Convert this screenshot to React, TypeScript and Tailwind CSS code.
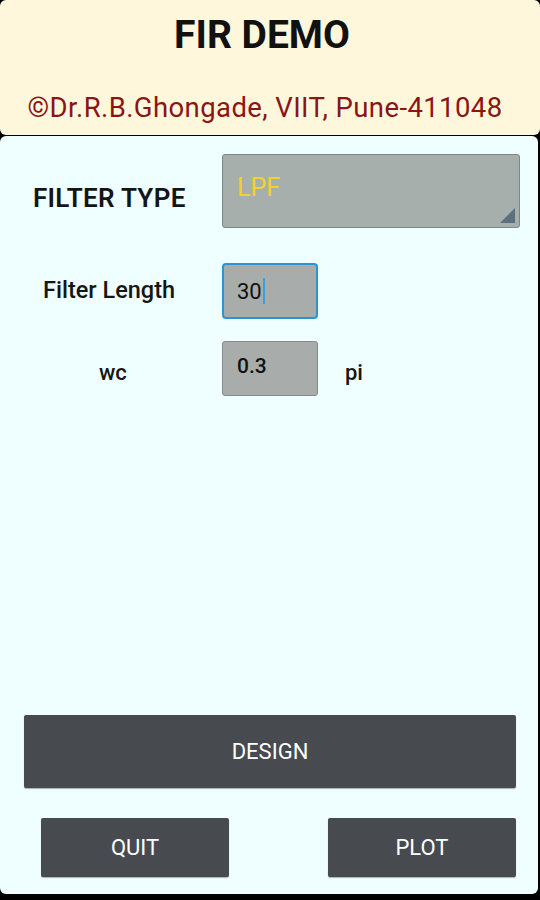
import React from "react";

export default function App() {
  return (
    <div
      className="w-[540px] h-[900px] bg-black flex flex-col overflow-hidden"
      style={{ fontFamily: "Roboto, 'Noto Sans', sans-serif" }}
    >
      {/* Header */}
      <div className="h-[135px] shrink-0 bg-[#fef7dc] rounded-[6px] flex flex-col items-center">
        <div className="mt-[12px] text-[39px] leading-[46px] font-bold text-[#111] mr-[16px]">FIR DEMO</div>
        <div className="mt-[34px] text-[27.5px] leading-[32px] text-[#8b1414] tracking-[0.4px] mr-[10px]">
          ©Dr.R.B.Ghongade, VIIT, Pune-411048
        </div>
      </div>

      {/* Body */}
      <div className="flex-1 mt-[1px] mb-[6px] mr-[2px] bg-[#effefe] rounded-[6px] flex flex-col">
        {/* Filter type row */}
        <div className="flex items-center mt-[18px]">
          <div className="w-[222px] pl-[33px] pt-[14px] text-[26px] font-semibold text-[#151515] tracking-[0.3px]">
            FILTER TYPE
          </div>
          <div className="relative w-[298px] h-[74px] bg-[#a7afac] border border-[#7f8784] rounded-[3px]">
            <div className="pl-[14px] pt-[18px] text-[25px] leading-[30px] text-[#f2d230]">LPF</div>
            <svg className="absolute right-[4px] bottom-[4px]" width="15" height="15" viewBox="0 0 15 15">
              <polygon points="15,0 15,15 0,15" fill="#5b6f7e" />
            </svg>
          </div>
        </div>

        {/* Filter length row */}
        <div className="flex items-center mt-[35px]">
          <div className="w-[222px] pl-[43px] text-[23.5px] font-medium text-[#151515]">Filter Length</div>
          <div className="w-[96px] h-[56px] bg-[#a8adab] border-2 border-[#2b95d3] rounded-[4px] flex items-center pl-[13px]">
            <span className="text-[22px] text-[#111]">30</span>
            <span className="w-[2px] h-[26px] bg-[#3aa0e0] ml-[1px]" />
          </div>
        </div>

        {/* wc row */}
        <div className="flex items-center mt-[22px]">
          <div className="w-[222px] pl-[99px] pt-[8px] text-[22px] font-medium text-[#151515]">wc</div>
          <div className="w-[96px] h-[55px] bg-[#a8adab] border border-[#858a88] rounded-[3px] flex items-center pl-[14px]">
            <span className="text-[21px] font-medium text-[#111] -mt-[4px]">0.3</span>
          </div>
          <div className="ml-[27px] pt-[8px] text-[22px] font-medium text-[#151515]">pi</div>
        </div>

        <div className="flex-1" />

        {/* Design button */}
        <div className="mx-[24px] mr-[22px] h-[73px] bg-[#474b4f] rounded-[2px] flex items-center justify-center shadow-[0_1px_1px_rgba(0,0,0,0.3)]">
          <span className="text-[22px] text-white">DESIGN</span>
        </div>

        {/* Quit / Plot */}
        <div className="flex justify-between ml-[41px] mr-[22px] mt-[30px] mb-[17px]">
          <div className="w-[188px] h-[59px] bg-[#474b4f] rounded-[2px] flex items-center justify-center shadow-[0_1px_1px_rgba(0,0,0,0.3)]">
            <span className="text-[22px] text-white">QUIT</span>
          </div>
          <div className="w-[188px] h-[59px] bg-[#474b4f] rounded-[2px] flex items-center justify-center shadow-[0_1px_1px_rgba(0,0,0,0.3)]">
            <span className="text-[22px] text-white">PLOT</span>
          </div>
        </div>
      </div>
    </div>
  );
}
